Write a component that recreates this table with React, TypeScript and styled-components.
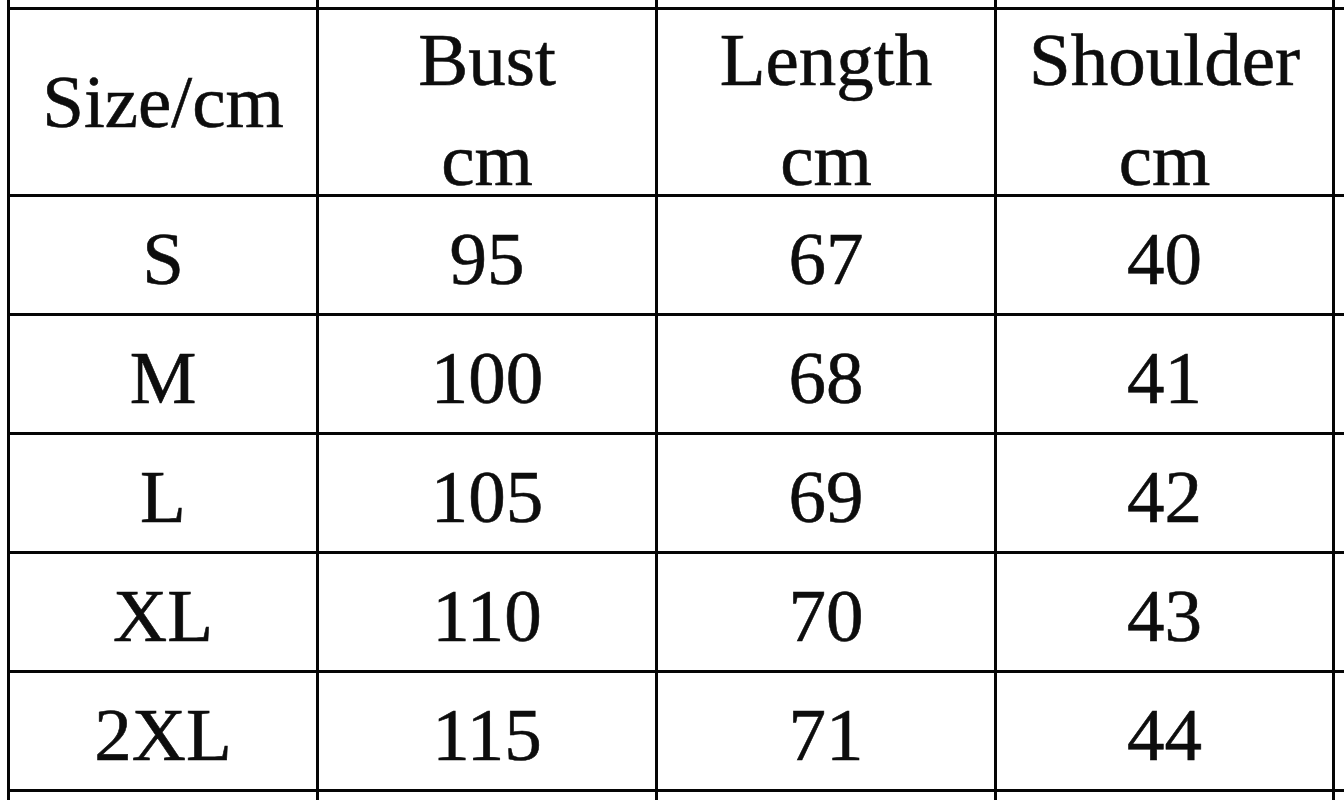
import React from "react";
import styled, { createGlobalStyle } from "styled-components";

const Global = createGlobalStyle`
  html, body {
    margin: 0;
    padding: 0;
    background: #ffffff;
    overflow: hidden;
  }
  body {
    font-family: "Liberation Serif", "Times New Roman", serif;
    color: #0d0d0d;
  }
`;

const Page = styled.div`
  width: 1344px;
  height: 800px;
  overflow: hidden;
  padding-left: 7px;
  box-sizing: border-box;
`;

const Grid = styled.div`
  display: grid;
  grid-template-columns: 312px 339px 339px 338px 60px;
  grid-template-rows: 10px 187px repeat(5, 119px) 30px;
`;

const Cell = styled.div<{ $first?: boolean; $edge?: "top" | "bottom"; $extra?: boolean }>`
  box-sizing: border-box;
  border-right: ${(p) => (p.$extra ? "none" : "3px solid #050505")};
  border-left: ${(p) => (p.$first ? "3px solid #050505" : "none")};
  border-bottom: ${(p) => (p.$edge === "bottom" ? "none" : "3px solid #050505")};
  display: flex;
  align-items: center;
  justify-content: center;
  overflow: visible;
`;

const HeadText = styled.div<{ $single?: boolean }>`
  align-self: ${(p) => (p.$single ? "center" : "flex-start")};
  font-size: 75px;
  line-height: 100px;
  text-align: center;
  white-space: nowrap;
  height: 100px;
  -webkit-text-stroke: 0.6px #0d0d0d;
`;

const BodyText = styled.div`
  font-size: 75px;
  line-height: 100px;
  padding-top: 7px;
  text-align: center;
  white-space: nowrap;
  -webkit-text-stroke: 0.6px #0d0d0d;
`;

const headers = [
  { lines: ["Size/cm"] },
  { lines: ["Bust", "cm"] },
  { lines: ["Length", "cm"] },
  { lines: ["Shoulder", "cm"] },
];

const rows = [
  ["S", "95", "67", "40"],
  ["M", "100", "68", "41"],
  ["L", "105", "69", "42"],
  ["XL", "110", "70", "43"],
  ["2XL", "115", "71", "44"],
];

export default function App() {
  return (
    <>
      <Global />
      <Page>
        <Grid>
          {[0, 1, 2, 3].map((i) => (
            <Cell key={`t${i}`} $first={i === 0} $edge="top" />
          ))}
          <Cell $edge="top" $extra />

          {headers.map((h, i) => (
            <Cell key={`h${i}`} $first={i === 0}>
              <HeadText $single={h.lines.length === 1}>
                {h.lines.map((l, j) => (
                  <div key={j}>{l}</div>
                ))}
              </HeadText>
            </Cell>
          ))}
          <Cell $extra />

          {rows.map((r, ri) => (
            <React.Fragment key={`r${ri}`}>
              {r.map((v, ci) => (
                <Cell key={ci} $first={ci === 0}>
                  <BodyText>{v}</BodyText>
                </Cell>
              ))}
              <Cell $extra />
            </React.Fragment>
          ))}

          {[0, 1, 2, 3].map((i) => (
            <Cell key={`b${i}`} $first={i === 0} $edge="bottom" />
          ))}
          <Cell $edge="bottom" $extra />
        </Grid>
      </Page>
    </>
  );
}
